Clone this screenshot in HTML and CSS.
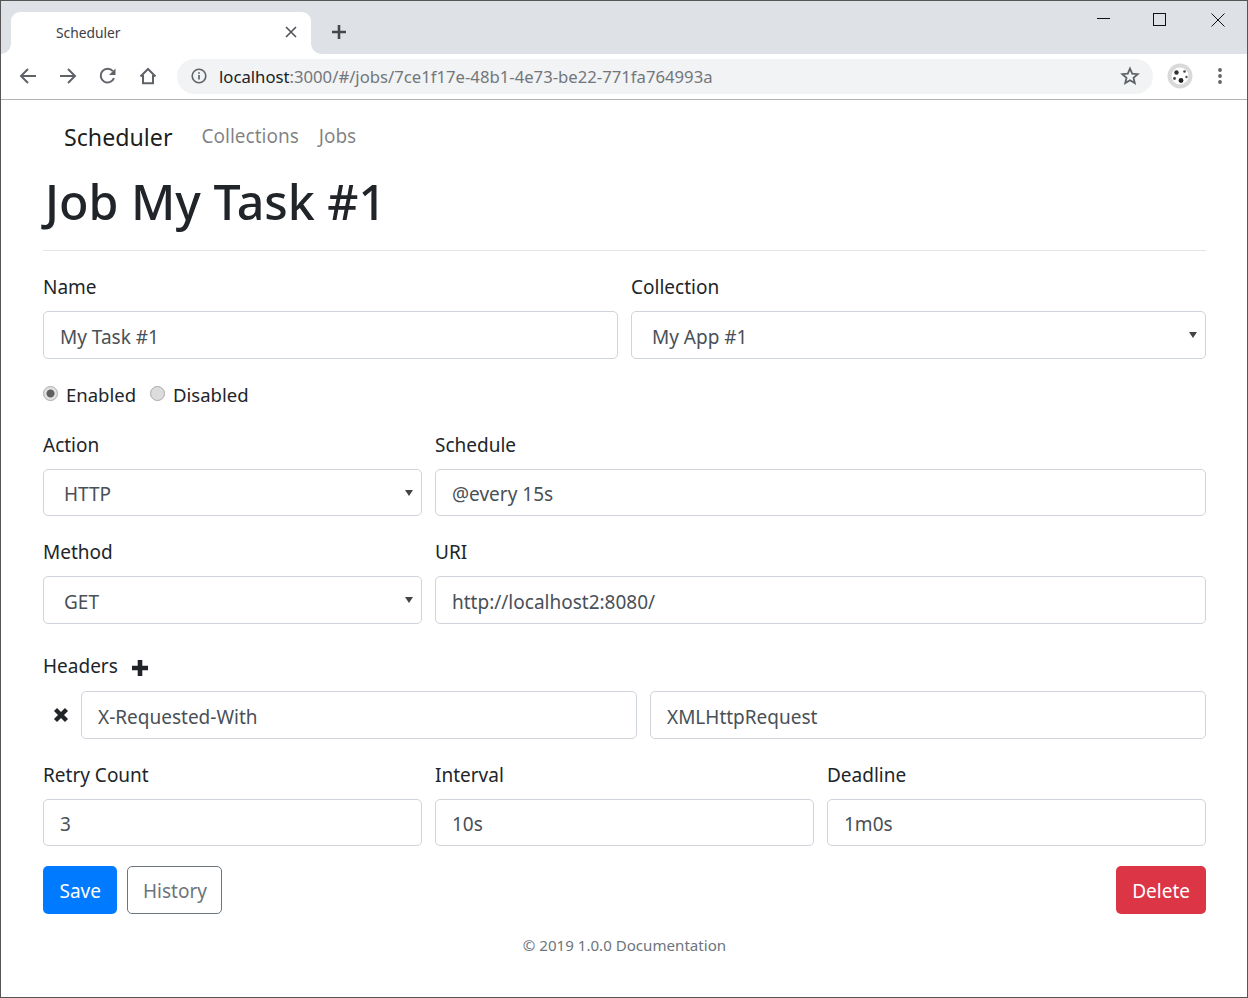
FILE: index.html
```html
<!DOCTYPE html>
<html lang="en">
<head>
<meta charset="utf-8">
<title>Scheduler</title>
<link rel="stylesheet" href="styles.css">
</head>
<body>
<div class="window">
  <div class="tabstrip">
    <div class="tab">
      <span class="tab-title">Scheduler</span>
      <svg class="tab-close" width="12" height="12" viewBox="0 0 12 12"><path d="M1 1l10 10M11 1L1 11" stroke="#50545a" stroke-width="1.6" fill="none"/></svg>
    </div>
    <svg class="new-tab" width="16" height="16" viewBox="0 0 16 16"><path d="M8 1v14M1 8h14" stroke="#44474c" stroke-width="2.6" fill="none"/></svg>
    <div class="win-controls">
      <svg class="win-min" width="14" height="14" viewBox="0 0 14 14"><path d="M0 5.500h13" stroke="#111" stroke-width="1" fill="none"/></svg>
      <svg width="14" height="14" viewBox="0 0 14 14"><rect x=".5" y=".5" width="12" height="12" stroke="#111" fill="none"/></svg>
      <svg width="14" height="14" viewBox="0 0 14 14"><path d="M.5.5l13 13M13.500.5l-13 13" stroke="#111" stroke-width="1" fill="none"/></svg>
    </div>
  </div>
  <div class="toolbar">
    <svg class="tool-icon" width="18" height="18" viewBox="0 0 18 18"><path d="M17 9H2M9 2L2 9l7 7" stroke="#5f6368" stroke-width="2" fill="none"/></svg>
    <svg class="tool-icon" width="18" height="18" viewBox="0 0 18 18"><path d="M1 9h15M9 2l7 7-7 7" stroke="#5f6368" stroke-width="2" fill="none"/></svg>
    <svg class="tool-icon" width="18" height="18" viewBox="0 0 18 18"><path d="M15 11.200A6.900 6.900 0 1 1 13.900 4.200" stroke="#5f6368" stroke-width="2" fill="none"/><path d="M16.500 1.500v6.500h-6.500z" fill="#5f6368"/></svg>
    <svg class="tool-icon" width="18" height="18" viewBox="0 0 18 18"><path d="M1.500 9.500L9 2l7.500 7.500M4 8v8.200h10V8" stroke="#5f6368" stroke-width="2" fill="none"/></svg>
    <div class="omnibox">
      <svg width="16" height="16" viewBox="0 0 16 16"><circle cx="8" cy="8" r="6.800" stroke="#5f6368" stroke-width="1.600" fill="none"/><path d="M8 7v4.500M8 4.200v1.600" stroke="#5f6368" stroke-width="1.700" fill="none"/></svg>
      <span class="url"><span class="url-host">localhost</span>:3000/#/jobs/7ce1f17e-48b1-4e73-be22-771fa764993a</span>
      <svg class="star" width="20" height="20" viewBox="0 0 20 20"><path d="M10 2.500l2.200 5.100 5.500.5-4.200 3.600 1.300 5.400L10 14.300l-4.800 2.800 1.300-5.400-4.200-3.600 5.500-.5z" stroke="#5f6368" stroke-width="1.800" fill="none"/></svg>
    </div>
    <svg class="avatar" width="26" height="26" viewBox="0 0 26 26"><circle cx="13" cy="13" r="12.500" fill="#d9d9d9"/><circle cx="13" cy="13" r="8.500" fill="#fff"/><circle cx="9.500" cy="9.500" r="2.200" fill="#333"/><circle cx="17.500" cy="8.500" r="1.300" fill="#444"/><circle cx="7.500" cy="15.500" r="1.400" fill="#444"/><circle cx="14" cy="17.500" r="2.400" fill="#222"/><circle cx="19.500" cy="14" r="1.200" fill="#555"/></svg>
    <svg class="menu" width="6" height="18" viewBox="0 0 6 18"><circle cx="3" cy="3" r="1.900" fill="#5f6368"/><circle cx="3" cy="9" r="1.900" fill="#5f6368"/><circle cx="3" cy="15" r="1.900" fill="#5f6368"/></svg>
  </div>
  <div class="page">
    <nav class="navbar">
      <a class="brand">Scheduler</a>
      <a class="nav-link">Collections</a>
      <a class="nav-link">Jobs</a>
    </nav>
    <h1 class="title">Job My Task #1</h1>
    <hr class="rule">
    <form class="form">
      <div class="row cols-2">
        <div class="group"><label class="label">Name</label><input class="control" value="My Task #1"></div>
        <div class="group"><label class="label">Collection</label><div class="select-wrap"><select class="control select"><option>My App #1</option></select></div></div>
      </div>
      <div class="radios">
        <label class="radio"><input type="radio" name="state" checked><span>Enabled</span></label>
        <label class="radio"><input type="radio" name="state"><span>Disabled</span></label>
      </div>
      <div class="row cols-1-2">
        <div class="group"><label class="label">Action</label><div class="select-wrap"><select class="control select"><option>HTTP</option></select></div></div>
        <div class="group"><label class="label">Schedule</label><input class="control" value="@every 15s"></div>
      </div>
      <div class="row cols-1-2">
        <div class="group"><label class="label">Method</label><div class="select-wrap"><select class="control select"><option>GET</option></select></div></div>
        <div class="group"><label class="label">URI</label><input class="control" value="http://localhost2:8080/"></div>
      </div>
      <div class="headers-label label"><span>Headers</span>
        <svg class="plus" width="16" height="16" viewBox="0 0 16 16"><path d="M8 0v16M0 8h16" stroke="#212529" stroke-width="4.600" fill="none"/></svg>
      </div>
      <div class="header-row">
        <svg class="remove" width="16" height="16" viewBox="0 0 16 16"><path d="M2.500 2.500l11 11M13.500 2.500l-11 11" stroke="#212529" stroke-width="4.300" fill="none"/></svg>
        <input class="control" value="X-Requested-With">
        <input class="control" value="XMLHttpRequest">
      </div>
      <div class="row cols-3">
        <div class="group"><label class="label">Retry Count</label><input class="control" value="3"></div>
        <div class="group"><label class="label">Interval</label><input class="control" value="10s"></div>
        <div class="group"><label class="label">Deadline</label><input class="control" value="1m0s"></div>
      </div>
      <div class="actions">
        <button type="button" class="btn btn-primary">Save</button>
        <button type="button" class="btn btn-outline">History</button>
        <button type="button" class="btn btn-danger">Delete</button>
      </div>
    </form>
    <footer class="footer">© 2019 1.0.0 Documentation</footer>
  </div>
</div>
</body>
</html>
```
FILE: styles.css
```css
* { box-sizing: border-box; }
html, body { margin: 0; padding: 0; }
body { font-family: "Noto Sans", "Open Sans", sans-serif; color: #212529; background: #fff; }
.window { width: 1248px; height: 998px; border: 1px solid #555; overflow: hidden; display: flex; flex-direction: column; }

.tabstrip { height: 53px; background: #dee1e6; display: flex; align-items: flex-end; padding-left: 10px; flex: none; }
.tab { position: relative; width: 300px; height: 42px; background: #fff; border-radius: 9px 9px 0 0; display: flex; align-items: center; padding: 0 14px 2px 45px; justify-content: space-between; }
.tab::before, .tab::after { content: ""; position: absolute; bottom: 0; width: 10px; height: 10px; }
.tab::before { left: -10px; background: radial-gradient(circle at 0 0, #dee1e6 9.500px, #fff 10px); }
.tab::after { right: -10px; background: radial-gradient(circle at 100% 0, #dee1e6 9.500px, #fff 10px); }
.tab-title { font-size: 13.800px; color: #3c4043; }
.tab-close { flex: none; }
.new-tab { margin: 0 0 14px 20px; }
.win-controls { margin-left: auto; align-self: flex-start; display: flex; gap: 44px; padding: 12px 22px 0 0; }
.win-min { margin-right: -2px; }

.toolbar { height: 46px; flex: none; display: flex; align-items: center; padding: 0 19px 1px 18px; border-bottom: 1px solid #b3b3b3; background: #fff; }
.tool-icon { margin-right: 22px; flex: none; }
.omnibox { margin-right: 14px; width: 976px; height: 35px; border-radius: 18px; background: #f1f3f4; display: flex; align-items: center; padding: 0 13px 0 14px; margin-left: -2px; flex: none; }
.url { margin-left: 12px; font-size: 16.700px; color: #73777c; white-space: nowrap; }
.url-host { color: #202124; }
.star { margin-left: auto; }
.avatar { flex: none; }
.menu { flex: none; margin-left: 24px; }

.page { padding: 0 41px 0 42px; flex: 1; }
.navbar { height: 73px; display: flex; align-items: center; padding: 0 0 0 21px; gap: 20px; }
.brand { font-size: 23.200px; color: rgba(0,0,0,.9); margin-right: 9px; }
.nav-link { font-size: 19px; color: rgba(0,0,0,.5); padding-bottom: 2px; }
.title { margin: 0; font-size: 48.300px; font-weight: 500; line-height: 56px; height: 60px; padding-left: 2px; }
.rule { border: 0; border-top: 1px solid rgba(0,0,0,.1); margin: 17px 0 20px; height: 0; }

.row { display: grid; column-gap: 13px; }
.cols-2 { grid-template-columns: 1fr 1fr; }
.cols-1-2 { grid-template-columns: 379px 771px; }
.cols-3 { grid-template-columns: repeat(3, 1fr); }
.group { margin-bottom: 20px; min-width: 0; }
.label { display: block; font-size: 19px; line-height: 30px; margin-bottom: 10px; padding-top: 1px; height: 30px; }
.control { display: block; width: 100%; height: 47.500px; border: 1px solid #ced4da; border-radius: 5px; padding: 4px 16px 0; font: inherit; font-size: 19px; color: #495057; background: #fff; }
.select-wrap { position: relative; }
.select-wrap::after { content: ""; position: absolute; right: 9px; top: 21px; border-left: 4px solid transparent; border-right: 4px solid transparent; border-top: 6px solid #444; pointer-events: none; }
.select { appearance: none; -webkit-appearance: none; padding-left: 20px; }

.radios { display: flex; gap: 14px; height: 30px; margin-bottom: 20px; align-items: center; padding-top: 2px; }
.radio { display: flex; align-items: center; font-size: 18.500px; gap: 8px; }
.radio input { appearance: none; -webkit-appearance: none; margin: -2px 0 0; width: 15px; height: 15px; border-radius: 50%; border: 1px solid #a9a9a9; background: #dcdcdc; }
.radio input:checked { background: radial-gradient(circle, #5f5f5f 3.500px, #e2e2e2 4.500px); }

.headers-label { margin-top: 7.500px; padding-top: 0; display: flex; align-items: center; gap: 14px; }
.plus { margin-top: 3px; }
.header-row { display: grid; grid-template-columns: 25px 556px 556px; column-gap: 13px; align-items: center; margin-bottom: 20px; }
.remove { margin-left: 10px; }

.actions { display: flex; gap: 10px; }
.btn { height: 47.500px; padding: 3px 15.500px 0; font: inherit; font-size: 19px; border-radius: 5px; border: 1px solid transparent; }
.btn-primary { background: #007bff; color: #fff; }
.btn-outline { background: #fff; color: #6c757d; border-color: #6c757d; padding-left: 14.500px; padding-right: 14.500px; }
.btn-danger { background: #dc3545; color: #fff; margin-left: auto; padding-left: 15px; padding-right: 15px; }
.footer { margin-top: 21px; text-align: center; font-size: 15.100px; color: #6c757d; }
```
